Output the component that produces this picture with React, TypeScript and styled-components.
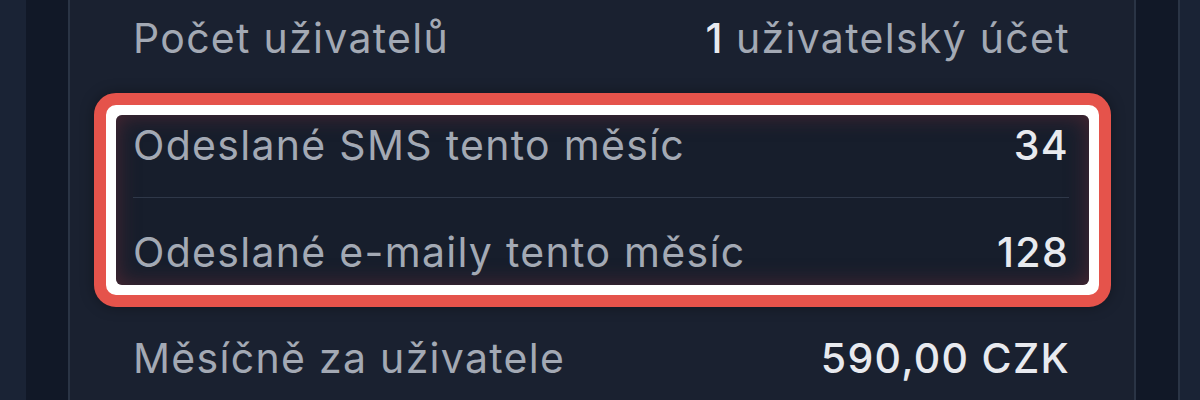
import React from "react";
import styled, { createGlobalStyle } from "styled-components";

const Global = createGlobalStyle`
  html, body { margin: 0; padding: 0; background: #1a2335; }
  body { font-family: Inter, "Noto Sans", sans-serif; -webkit-font-smoothing: antialiased; }
  #root { width: 1200px; height: 400px; overflow: hidden; }
`;

const Page = styled.div`
  display: flex;
  width: 1200px;
  height: 400px;
  background: #1a2335;
`;

const OuterStrip = styled.div<{ $w: number }>`
  flex: 0 0 ${(p) => p.$w}px;
  background: #1a2335;
`;

const Gutter = styled.div<{ $side: "left" | "right" }>`
  flex: 0 0 42px;
  background: #111827;
  ${(p) =>
    p.$side === "left"
      ? "border-right: 2px solid #2a3445;"
      : "border-left: 2px solid #2a3445; border-right: 2px solid #2a3445;"}
`;

const Panel = styled.div`
  flex: 1;
  background: #1a2130;
  padding: 14px 64px 0 63px;
  display: flex;
  flex-direction: column;
`;

const Row = styled.div<{ $mt?: number }>`
  display: flex;
  justify-content: space-between;
  align-items: baseline;
  height: 48px;
  line-height: 48px;
  font-size: 41px;
  letter-spacing: 1.3px;
  white-space: nowrap;
  margin-top: ${(p) => p.$mt ?? 0}px;
`;

const Label = styled.span`
  color: #a3a9b4;
  font-weight: 400;
`;

const Value = styled.span`
  color: #e8eaef;
  font-weight: 500;
`;

const Muted = styled.span`
  color: #a3a9b4;
  font-weight: 400;
`;

const Highlight = styled.div`
  margin: 31px -41px 0 -39px;
  border: 12px solid #e5534b;
  border-radius: 22px;
  background: #ffffff;
  padding: 10px;
  box-shadow: 0 0 14px rgba(0, 0, 0, 0.35);
`;

const HighlightInner = styled.div`
  background: #171e2c;
  border-radius: 6px;
  padding: 6px 20px 9px 17px;
  box-shadow: inset 0 0 22px rgba(120, 45, 55, 0.55);
  display: flex;
  flex-direction: column;
`;

const Divider = styled.div`
  height: 1px;
  background: #2f3849;
  margin-top: 28px;
`;

export default function App() {
  return (
    <>
      <Global />
      <Page>
        <OuterStrip $w={26} />
        <Gutter $side="left" />
        <Panel>
          <Row>
            <Label>Počet uživatelů</Label>
            <Value>
              1 <Muted>uživatelský účet</Muted>
            </Value>
          </Row>
          <Highlight>
            <HighlightInner>
              <Row>
                <Label>Odeslané SMS tento měsíc</Label>
                <Value>34</Value>
              </Row>
              <Divider />
              <Row $mt={30}>
                <Label>Odeslané e-maily tento měsíc</Label>
                <Value>128</Value>
              </Row>
            </HighlightInner>
          </Highlight>
          <Row $mt={27}>
            <Label>Měsíčně za uživatele</Label>
            <Value>590,00 CZK</Value>
          </Row>
        </Panel>
        <Gutter $side="right" />
        <OuterStrip $w={20} />
      </Page>
    </>
  );
}
